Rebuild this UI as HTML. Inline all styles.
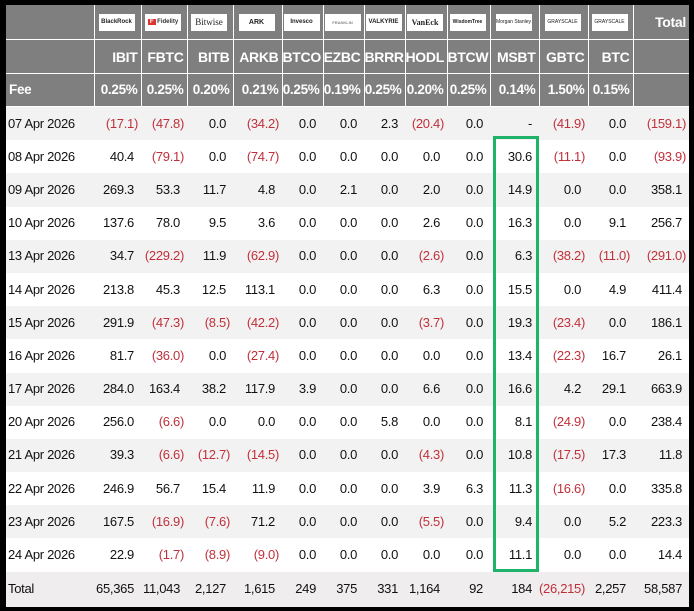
<!DOCTYPE html>
<html><head><meta charset="utf-8"><style>
html,body{margin:0;padding:0;background:#000;}
body{width:694px;height:611px;position:relative;overflow:hidden;font-family:"Liberation Sans",Arial,sans-serif;}
table{position:absolute;left:6px;top:5px;border-collapse:collapse;table-layout:fixed;width:683px;}
td{padding:0 3px 0 0;text-align:right;font-size:13px;letter-spacing:-0.3px;white-space:nowrap;overflow:hidden;color:#111;line-height:16px;}
tr.h td{background:#7f7f7f;color:#fff;font-weight:bold;font-size:14px;border-left:1px solid #fff;border-bottom:1px solid #fff;}
tr.h td:first-child{border-left:none;text-align:left;padding-left:3px;}
tr.h1 td{height:34px;}
tr.h2 td{height:33px;}
tr.h3 td{height:32px;font-size:13.5px;}
tr.d td{height:33.2px;}
tr.d:nth-child(even) td{background:#f3f2f2;}
tr.d:nth-child(odd) td{background:#fff;}
tr.d td:first-child,tr.t td:first-child{text-align:left;padding-left:2px;}
tr.t td{height:35px;background:#f0edee;}
.n{color:#c0303a;}
.p{padding-right:4px;display:inline-block;}
.logo{display:inline-block;background:#fff;width:36px;height:17px;vertical-align:middle;color:#222;font-size:6px;line-height:17px;text-align:center;font-weight:bold;letter-spacing:0;overflow:hidden;margin-right:2px;}
tr.h1 td.c{text-align:center;padding:0;}
#box{position:absolute;left:493px;top:136px;width:40px;height:430px;border:3px solid #1fb36a;}
</style></head><body>
<table>
<colgroup><col style="width:88px"><col style="width:47px"><col style="width:46px"><col style="width:46px"><col style="width:49px"><col style="width:41px"><col style="width:41px"><col style="width:41px"><col style="width:42px"><col style="width:43px"><col style="width:49px"><col style="width:49px"><col style="width:45px"><col style="width:56px"></colgroup>
<tr class="h h1"><td></td><td class="c"><span class="logo">BlackRock</span></td><td class="c"><span class="logo" style="color:#333"><span style="background:#d33;color:#fff;padding:0 2px">F</span> Fidelity</span></td><td class="c"><span class="logo" style="font-size:9px;font-weight:normal;font-family:'Liberation Serif',serif">Bitwise</span></td><td class="c"><span class="logo" style="font-size:7px">ARK</span></td><td class="c"><span class="logo">Invesco</span></td><td class="c"><span class="logo" style="color:#888;font-size:4px">FRANKLIN</span></td><td class="c"><span class="logo">VALKYRIE</span></td><td class="c"><span class="logo" style="font-size:8px;font-family:'Liberation Serif',serif">VanEck</span></td><td class="c"><span class="logo" style="font-size:5px">WisdomTree</span></td><td class="c"><span class="logo" style="font-size:5px;font-weight:normal">Morgan Stanley</span></td><td class="c"><span class="logo" style="font-size:5px;font-weight:normal">GRAYSCALE</span></td><td class="c"><span class="logo" style="font-size:5px;font-weight:normal">GRAYSCALE</span></td><td style="vertical-align:top;"><div style="padding-top:9px">Total</div></td></tr>
<tr class="h h2"><td></td><td>IBIT</td><td>FBTC</td><td>BITB</td><td>ARKB</td><td>BTCO</td><td>EZBC</td><td>BRRR</td><td>HODL</td><td>BTCW</td><td>MSBT</td><td>GBTC</td><td>BTC</td><td></td></tr>
<tr class="h h3"><td>Fee</td><td>0.25%</td><td>0.25%</td><td>0.20%</td><td>0.21%</td><td>0.25%</td><td>0.19%</td><td>0.25%</td><td>0.20%</td><td>0.25%</td><td>0.14%</td><td>1.50%</td><td>0.15%</td><td></td></tr>
</table>
<div id="box"></div>
<script>
var rows=[
["07 Apr 2026","(17.1)","(47.8)","0.0","(34.2)","0.0","0.0","2.3","(20.4)","0.0","-","(41.9)","0.0","(159.1)"],
["08 Apr 2026","40.4","(79.1)","0.0","(74.7)","0.0","0.0","0.0","0.0","0.0","30.6","(11.1)","0.0","(93.9)"],
["09 Apr 2026","269.3","53.3","11.7","4.8","0.0","2.1","0.0","2.0","0.0","14.9","0.0","0.0","358.1"],
["10 Apr 2026","137.6","78.0","9.5","3.6","0.0","0.0","0.0","2.6","0.0","16.3","0.0","9.1","256.7"],
["13 Apr 2026","34.7","(229.2)","11.9","(62.9)","0.0","0.0","0.0","(2.6)","0.0","6.3","(38.2)","(11.0)","(291.0)"],
["14 Apr 2026","213.8","45.3","12.5","113.1","0.0","0.0","0.0","6.3","0.0","15.5","0.0","4.9","411.4"],
["15 Apr 2026","291.9","(47.3)","(8.5)","(42.2)","0.0","0.0","0.0","(3.7)","0.0","19.3","(23.4)","0.0","186.1"],
["16 Apr 2026","81.7","(36.0)","0.0","(27.4)","0.0","0.0","0.0","0.0","0.0","13.4","(22.3)","16.7","26.1"],
["17 Apr 2026","284.0","163.4","38.2","117.9","3.9","0.0","0.0","6.6","0.0","16.6","4.2","29.1","663.9"],
["20 Apr 2026","256.0","(6.6)","0.0","0.0","0.0","0.0","5.8","0.0","0.0","8.1","(24.9)","0.0","238.4"],
["21 Apr 2026","39.3","(6.6)","(12.7)","(14.5)","0.0","0.0","0.0","(4.3)","0.0","10.8","(17.5)","17.3","11.8"],
["22 Apr 2026","246.9","56.7","15.4","11.9","0.0","0.0","0.0","3.9","6.3","11.3","(16.6)","0.0","335.8"],
["23 Apr 2026","167.5","(16.9)","(7.6)","71.2","0.0","0.0","0.0","(5.5)","0.0","9.4","0.0","5.2","223.3"],
["24 Apr 2026","22.9","(1.7)","(8.9)","(9.0)","0.0","0.0","0.0","0.0","0.0","11.1","0.0","0.0","14.4"]];
var t=document.querySelector('table'),h='';
rows.forEach(function(r){h+='<tr class="d">';r.forEach(function(c,i){if(i==0)h+='<td>'+c+'</td>';else if(c[0]=='(')h+='<td class="n">'+c+'</td>';else h+='<td><span class="p">'+c+'</span></td>';});h+='</tr>';});
var tot=["Total","65,365","11,043","2,127","1,615","249","375","331","1,164","92","184","(26,215)","2,257","58,587"];
h+='<tr class="t">';tot.forEach(function(c,i){if(i==0)h+='<td>'+c+'</td>';else if(c[0]=='(')h+='<td class="n">'+c+'</td>';else h+='<td><span class="p">'+c+'</span></td>';});h+='</tr>';
t.tBodies[0].insertAdjacentHTML('beforeend',h);
</script>
</body></html>
